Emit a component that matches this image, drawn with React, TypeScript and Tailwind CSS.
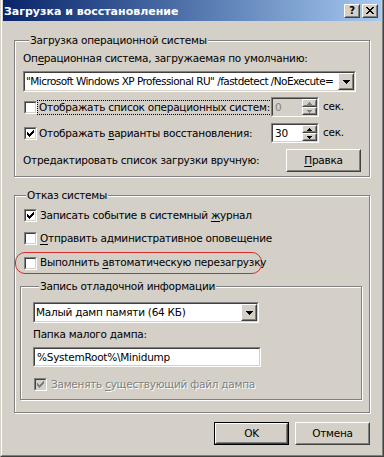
import React from "react";

const FONT = "font-['DejaVu_Sans',sans-serif]";

function CheckMark({ color }: { color: string }) {
  const px: [number, number][] = [
    [6, 0],
    [5, 1], [6, 1],
    [0, 2], [4, 2], [5, 2], [6, 2],
    [0, 3], [1, 3], [3, 3], [4, 3], [5, 3],
    [0, 4], [1, 4], [2, 4], [3, 4], [4, 4],
    [1, 5], [2, 5], [3, 5],
    [2, 6],
  ];
  return (
    <svg width="7" height="7" viewBox="0 0 7 7" shapeRendering="crispEdges">
      {px.map(([x, y], i) => (
        <rect key={i} x={x} y={y} width="1" height="1" fill={color} />
      ))}
    </svg>
  );
}

function Check({ checked, disabled }: { checked?: boolean; disabled?: boolean }) {
  return (
    <div className="w-[13px] h-[13px] shrink-0 border border-t-[#808080] border-l-[#808080] border-b-white border-r-white">
      <div
        className={`w-full h-full border border-t-[#404040] border-l-[#404040] border-b-[#d4d0c8] border-r-[#d4d0c8] flex items-center justify-center ${
          disabled ? "bg-[#d4d0c8]" : "bg-white"
        }`}
      >
        {checked && <CheckMark color={disabled ? "#808080" : "#000000"} />}
      </div>
    </div>
  );
}

function Raised({ className, children }: { className?: string; children?: React.ReactNode }) {
  return (
    <div className={`border border-t-white border-l-white border-b-[#404040] border-r-[#404040] bg-[#d4d0c8] ${className ?? ""}`}>
      <div className="w-full h-full border border-t-[#d4d0c8] border-l-[#d4d0c8] border-b-[#808080] border-r-[#808080] flex items-center justify-center">
        {children}
      </div>
    </div>
  );
}

function Sunken({ className, bg, children }: { className?: string; bg?: string; children?: React.ReactNode }) {
  return (
    <div className={`border border-t-[#808080] border-l-[#808080] border-b-white border-r-white ${className ?? ""}`}>
      <div className={`w-full h-full border border-t-[#404040] border-l-[#404040] border-b-[#d4d0c8] border-r-[#d4d0c8] flex items-center overflow-hidden ${bg ?? "bg-white"}`}>
        {children}
      </div>
    </div>
  );
}

function DownArrow({ color = "#000" }: { color?: string }) {
  return (
    <svg width="7" height="4" viewBox="0 0 7 4" shapeRendering="crispEdges">
      <rect x="0" y="0" width="7" height="1" fill={color} />
      <rect x="1" y="1" width="5" height="1" fill={color} />
      <rect x="2" y="2" width="3" height="1" fill={color} />
      <rect x="3" y="3" width="1" height="1" fill={color} />
    </svg>
  );
}

function SmallArrow({ up, color }: { up?: boolean; color: string }) {
  return (
    <svg width="5" height="3" viewBox="0 0 5 3" shapeRendering="crispEdges">
      {up ? (
        <>
          <rect x="2" y="0" width="1" height="1" fill={color} />
          <rect x="1" y="1" width="3" height="1" fill={color} />
          <rect x="0" y="2" width="5" height="1" fill={color} />
        </>
      ) : (
        <>
          <rect x="0" y="0" width="5" height="1" fill={color} />
          <rect x="1" y="1" width="3" height="1" fill={color} />
          <rect x="2" y="2" width="1" height="1" fill={color} />
        </>
      )}
    </svg>
  );
}

function Combo({ text, className, textClass }: { text: string; className: string; textClass?: string }) {
  return (
    <Sunken className={className}>
      <span className={`flex-1 pl-[1px] whitespace-nowrap overflow-hidden leading-[13px] ${textClass ?? ""}`}>{text}</span>
      <Raised className="w-[16px] h-full shrink-0">
        <DownArrow />
      </Raised>
    </Sunken>
  );
}

function Spin({ value, disabled }: { value: string; disabled?: boolean }) {
  const c = disabled ? "#808080" : "#000000";
  return (
    <Sunken className="w-[48px] h-[20px] shrink-0" bg={disabled ? "bg-[#d4d0c8]" : "bg-white"}>
      <span className={`flex-1 pl-[2px] leading-[13px] ${disabled ? "text-[#808080]" : "text-black"}`}>{value}</span>
      <div className="flex flex-col w-[15px] h-full shrink-0">
        <Raised className="w-full h-[8px]">
          <SmallArrow up color={c} />
        </Raised>
        <Raised className="w-full h-[8px]">
          <SmallArrow color={c} />
        </Raised>
      </div>
    </Sunken>
  );
}

function U({ children }: { children: React.ReactNode }) {
  return <span className="underline underline-offset-[2px]">{children}</span>;
}

function Group({
  legend,
  className,
  children,
}: {
  legend: string;
  className?: string;
  children: React.ReactNode;
}) {
  return (
    <fieldset
      className={`border border-[#808080] shadow-[inset_1px_1px_0_#ffffff,1px_1px_0_#ffffff] ${className ?? ""}`}
    >
      <legend className="ml-[6px] px-[1px] bg-[#d4d0c8] leading-[13px] whitespace-nowrap">{legend}</legend>
      {children}
    </fieldset>
  );
}

export default function App() {
  return (
    <div className={`w-[384px] h-[457px] ${FONT} text-[10.5px] tracking-[-0.25px] text-black select-none whitespace-nowrap`}>
      <div className="w-full h-full border-l border-r border-b border-l-[#d4d0c8] border-r-[#404040] border-b-[#404040]">
        <div className="w-full h-full border-l border-r border-b border-l-white border-r-[#808080] border-b-[#808080] bg-[#d4d0c8] px-[1px] pb-[1px] flex flex-col">
          {/* Title bar */}
          <div className="h-[21px] shrink-0 flex items-center bg-gradient-to-r from-[#0a246a] to-[#a6caf0] pl-[1px] pr-[3px]">
            <span className="text-white font-bold text-[11px] tracking-[0px] leading-[13px] mt-[2px] flex-1">
              Загрузка и восстановление
            </span>
            <Raised className="w-[16px] h-[14px] mr-[2px]">
              <span className="font-bold text-[10px] leading-[10px]">?</span>
            </Raised>
            <Raised className="w-[16px] h-[14px]">
              <svg width="8" height="7" viewBox="0 0 8 7" shapeRendering="crispEdges">
                <path d="M0 0h2v1H0zM6 0h2v1H6zM1 1h2v1H1zM5 1h2v1H5zM2 2h4v1H2zM3 3h2v1H3zM2 4h4v1H2zM1 5h2v1H1zM5 5h2v1H5zM0 6h2v1H0zM6 6h2v1H6z" fill="#000" />
              </svg>
            </Raised>
          </div>

          {/* Content */}
          <div className="flex-1 flex flex-col px-[11px]">
            {/* Group 1 */}
            <Group legend="Загрузка операционной системы" className="mt-[13px] px-[8px] pb-[4px]">
              <div className="h-[14px] mt-[5px] flex items-center">
                <span>
                  Оп<U>е</U>рационная система, загружаемая по умолчанию:
                </span>
              </div>
              <Combo
                className="mt-[5px] h-[21px] w-[333px]"
                textClass="tracking-[-0.55px]"
                text={'"Microsoft Windows XP Professional RU" /fastdetect /NoExecute='}
              />
              <div className="h-[20px] mt-[5px] flex items-center">
                <div className="ml-[1px]">
                  <Check />
                </div>
                <div className="w-[234px] pl-[1px] flex items-center">
                  <span className="px-[1px] leading-[13px] outline outline-1 outline-dotted outline-[#000] outline-offset-0">
                    Отображать список операционных систем:
                  </span>
                </div>
                <Spin value="0" disabled />
                <span className="ml-[4px]">сек.</span>
              </div>
              <div className="h-[20px] mt-[6px] flex items-center">
                <div className="ml-[1px]">
                  <Check checked />
                </div>
                <div className="w-[234px] pl-[2px] flex items-center">
                  <span className="leading-[13px]">
                    Отображать <U>в</U>арианты восстановления:
                  </span>
                </div>
                <Spin value="30" />
                <span className="ml-[4px]">сек.</span>
              </div>
              <div className="h-[23px] mt-[6px] flex items-center">
                <span className="flex-1">Отредактировать список загрузки вручную:</span>
                <Raised className="w-[75px] h-[23px]">
                  <span>
                    <U>П</U>равка
                  </span>
                </Raised>
              </div>
            </Group>

            {/* Group 2 */}
            <Group legend="Отказ системы" className="mt-[12px] pl-[5px] pr-[7px] pb-[12px]">
              <div className="h-[17px] mt-[5px] ml-[4px] flex items-center gap-[3px]">
                <Check checked />
                <span>
                  Записать событие в системный <U>ж</U>урнал
                </span>
              </div>
              <div className="h-[17px] mt-[6px] ml-[4px] flex items-center gap-[3px]">
                <Check />
                <span>
                  <U>О</U>тправить административное оповещение
                </span>
              </div>
              <div className="h-[22px] mt-[5px] -ml-[5px] w-[247px] pl-[8px] flex items-center gap-[3px] border border-[#d42a2a] rounded-[10px]">
                <Check />
                <span>
                  Выполнить <U>а</U>втоматическую перезагрузку
                </span>
              </div>

              <Group legend="Запись отладочной информации" className="mt-[6px] pl-[12px] pb-[8px]">
                <Combo className="mt-[9px] h-[21px] w-[226px]" text="Малый дамп памяти (64 КБ)" />
                <div className="h-[14px] mt-[5px] flex items-center">
                  <span>Папка малого дампа:</span>
                </div>
                <Sunken className="mt-[5px] h-[20px] w-[228px]">
                  <span className="pl-[2px] leading-[13px]">%SystemRoot%\Minidump</span>
                </Sunken>
                <div className="h-[13px] mt-[11px] ml-[1px] flex items-center gap-[4px]">
                  <Check checked disabled />
                  <span className="text-[#808080] [text-shadow:1px_1px_0_#ffffff]">
                    Заменять <U>с</U>уществующий файл дампа
                  </span>
                </div>
              </Group>
            </Group>

            {/* Buttons */}
            <div className="mt-[9px] flex justify-end gap-[6px]">
              <div className="border border-black">
                <Raised className="w-[73px] h-[21px]">
                  <span>OK</span>
                </Raised>
              </div>
              <Raised className="w-[75px] h-[23px]">
                <span>Отмена</span>
              </Raised>
            </div>
          </div>
        </div>
      </div>
    </div>
  );
}
